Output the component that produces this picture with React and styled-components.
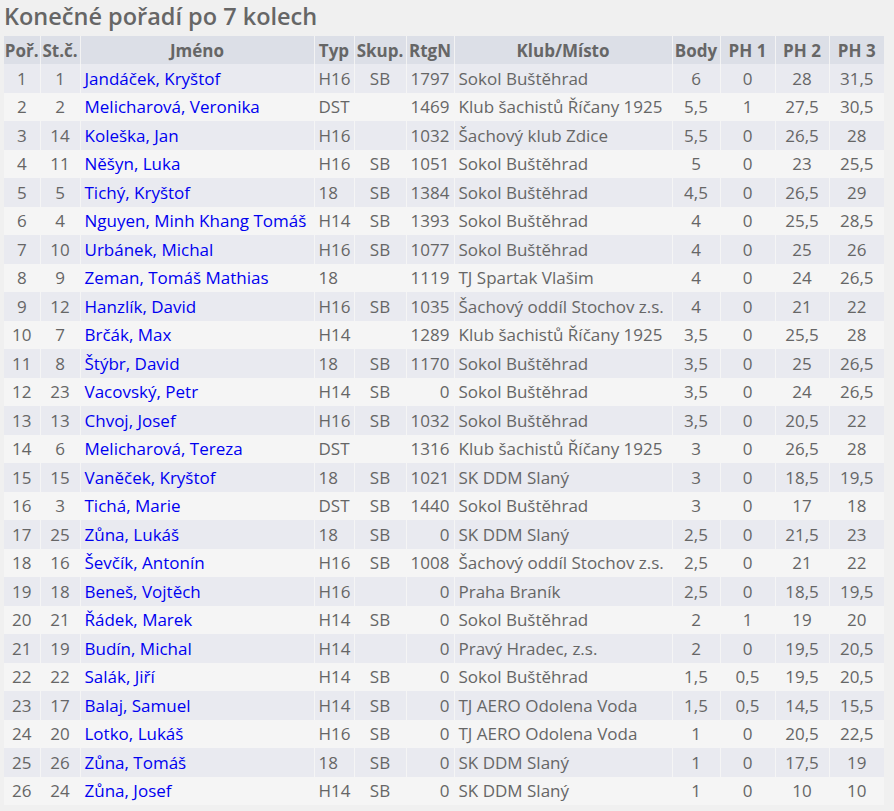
import React from "react";
import styled, { createGlobalStyle } from "styled-components";

const GlobalStyle = createGlobalStyle`
  html, body {
    margin: 0;
    padding: 0;
    background-color: #f0f0f0;
  }
  body {
    font-family: "Open Sans", "Noto Sans", sans-serif;
    color: #666;
  }
`;

const Page = styled.div`
  padding: 0 4px 4px 4px;
`;

const Title = styled.h1`
  margin: 0 0 3px 0;
  font-size: 23.5px;
  line-height: 33px;
  font-weight: 600;
  color: #666;
`;

const Table = styled.table`
  width: 880px;
  table-layout: fixed;
  border-collapse: collapse;
  font-size: 17px;
`;

const HeadCell = styled.th`
  height: 28px;
  padding: 0;
  background-color: #dcdfe7;
  border-left: 1px solid #f3f3f3;
  font-weight: 700;
  text-align: center;
  white-space: nowrap;
  &:first-child {
    border-left: none;
  }
`;

const Row = styled.tr`
  background-color: ${(p) => (p.$odd ? "#e9eaf0" : "#f5f5f5")};
`;

const Cell = styled.td`
  height: 28.5px;
  padding: 0 4px;
  border-left: 1px solid #f5f5f5;
  text-align: ${(p) => p.$align || "center"};
  white-space: nowrap;
  overflow: hidden;
  &:first-child {
    border-left: none;
  }
`;

const NameLink = styled.a`
  color: #0000f0;
  text-decoration: none;
`;

const columns = [
  { title: "Poř.", width: 36 },
  { title: "St.č.", width: 40 },
  { title: "Jméno", width: 234 },
  { title: "Typ", width: 40 },
  { title: "Skup.", width: 52 },
  { title: "RtgN", width: 48 },
  { title: "Klub/Místo", width: 218 },
  { title: "Body", width: 48 },
  { title: "PH 1", width: 55 },
  { title: "PH 2", width: 54 },
  { title: "PH 3", width: 55 },
];

const rows = [
  [1, 1, "Jandáček, Kryštof", "H16", "SB", 1797, "Sokol Buštěhrad", "6", "0", "28", "31,5"],
  [2, 2, "Melicharová, Veronika", "DST", "", 1469, "Klub šachistů Říčany 1925", "5,5", "1", "27,5", "30,5"],
  [3, 14, "Koleška, Jan", "H16", "", 1032, "Šachový klub Zdice", "5,5", "0", "26,5", "28"],
  [4, 11, "Něšyn, Luka", "H16", "SB", 1051, "Sokol Buštěhrad", "5", "0", "23", "25,5"],
  [5, 5, "Tichý, Kryštof", "18", "SB", 1384, "Sokol Buštěhrad", "4,5", "0", "26,5", "29"],
  [6, 4, "Nguyen, Minh Khang Tomáš", "H14", "SB", 1393, "Sokol Buštěhrad", "4", "0", "25,5", "28,5"],
  [7, 10, "Urbánek, Michal", "H16", "SB", 1077, "Sokol Buštěhrad", "4", "0", "25", "26"],
  [8, 9, "Zeman, Tomáš Mathias", "18", "", 1119, "TJ Spartak Vlašim", "4", "0", "24", "26,5"],
  [9, 12, "Hanzlík, David", "H16", "SB", 1035, "Šachový oddíl Stochov z.s.", "4", "0", "21", "22"],
  [10, 7, "Brčák, Max", "H14", "", 1289, "Klub šachistů Říčany 1925", "3,5", "0", "25,5", "28"],
  [11, 8, "Štýbr, David", "18", "SB", 1170, "Sokol Buštěhrad", "3,5", "0", "25", "26,5"],
  [12, 23, "Vacovský, Petr", "H14", "SB", 0, "Sokol Buštěhrad", "3,5", "0", "24", "26,5"],
  [13, 13, "Chvoj, Josef", "H16", "SB", 1032, "Sokol Buštěhrad", "3,5", "0", "20,5", "22"],
  [14, 6, "Melicharová, Tereza", "DST", "", 1316, "Klub šachistů Říčany 1925", "3", "0", "26,5", "28"],
  [15, 15, "Vaněček, Kryštof", "18", "SB", 1021, "SK DDM Slaný", "3", "0", "18,5", "19,5"],
  [16, 3, "Tichá, Marie", "DST", "SB", 1440, "Sokol Buštěhrad", "3", "0", "17", "18"],
  [17, 25, "Zůna, Lukáš", "18", "SB", 0, "SK DDM Slaný", "2,5", "0", "21,5", "23"],
  [18, 16, "Ševčík, Antonín", "H16", "SB", 1008, "Šachový oddíl Stochov z.s.", "2,5", "0", "21", "22"],
  [19, 18, "Beneš, Vojtěch", "H16", "", 0, "Praha Braník", "2,5", "0", "18,5", "19,5"],
  [20, 21, "Řádek, Marek", "H14", "SB", 0, "Sokol Buštěhrad", "2", "1", "19", "20"],
  [21, 19, "Budín, Michal", "H14", "", 0, "Pravý Hradec, z.s.", "2", "0", "19,5", "20,5"],
  [22, 22, "Salák, Jiří", "H14", "SB", 0, "Sokol Buštěhrad", "1,5", "0,5", "19,5", "20,5"],
  [23, 17, "Balaj, Samuel", "H14", "SB", 0, "TJ AERO Odolena Voda", "1,5", "0,5", "14,5", "15,5"],
  [24, 20, "Lotko, Lukáš", "H16", "SB", 0, "TJ AERO Odolena Voda", "1", "0", "20,5", "22,5"],
  [25, 26, "Zůna, Tomáš", "18", "SB", 0, "SK DDM Slaný", "1", "0", "17,5", "19"],
  [26, 24, "Zůna, Josef", "H14", "SB", 0, "SK DDM Slaný", "1", "0", "10", "10"],
];

export default function App() {
  return (
    <Page>
      <GlobalStyle />
      <Title>Konečné pořadí po 7 kolech</Title>
      <Table>
        <colgroup>
          {columns.map((c) => (
            <col key={c.title} style={{ width: c.width }} />
          ))}
        </colgroup>
        <thead>
          <tr>
            {columns.map((c) => (
              <HeadCell key={c.title}>{c.title}</HeadCell>
            ))}
          </tr>
        </thead>
        <tbody>
          {rows.map((r, i) => (
            <Row key={r[0]} $odd={i % 2 === 0}>
              <Cell>{r[0]}</Cell>
              <Cell>{r[1]}</Cell>
              <Cell $align="left">
                <NameLink href="#">{r[2]}</NameLink>
              </Cell>
              <Cell $align="left">{r[3]}</Cell>
              <Cell>{r[4]}</Cell>
              <Cell $align="right">{r[5]}</Cell>
              <Cell $align="left">{r[6]}</Cell>
              <Cell>{r[7]}</Cell>
              <Cell>{r[8]}</Cell>
              <Cell>{r[9]}</Cell>
              <Cell>{r[10]}</Cell>
            </Row>
          ))}
        </tbody>
      </Table>
    </Page>
  );
}
